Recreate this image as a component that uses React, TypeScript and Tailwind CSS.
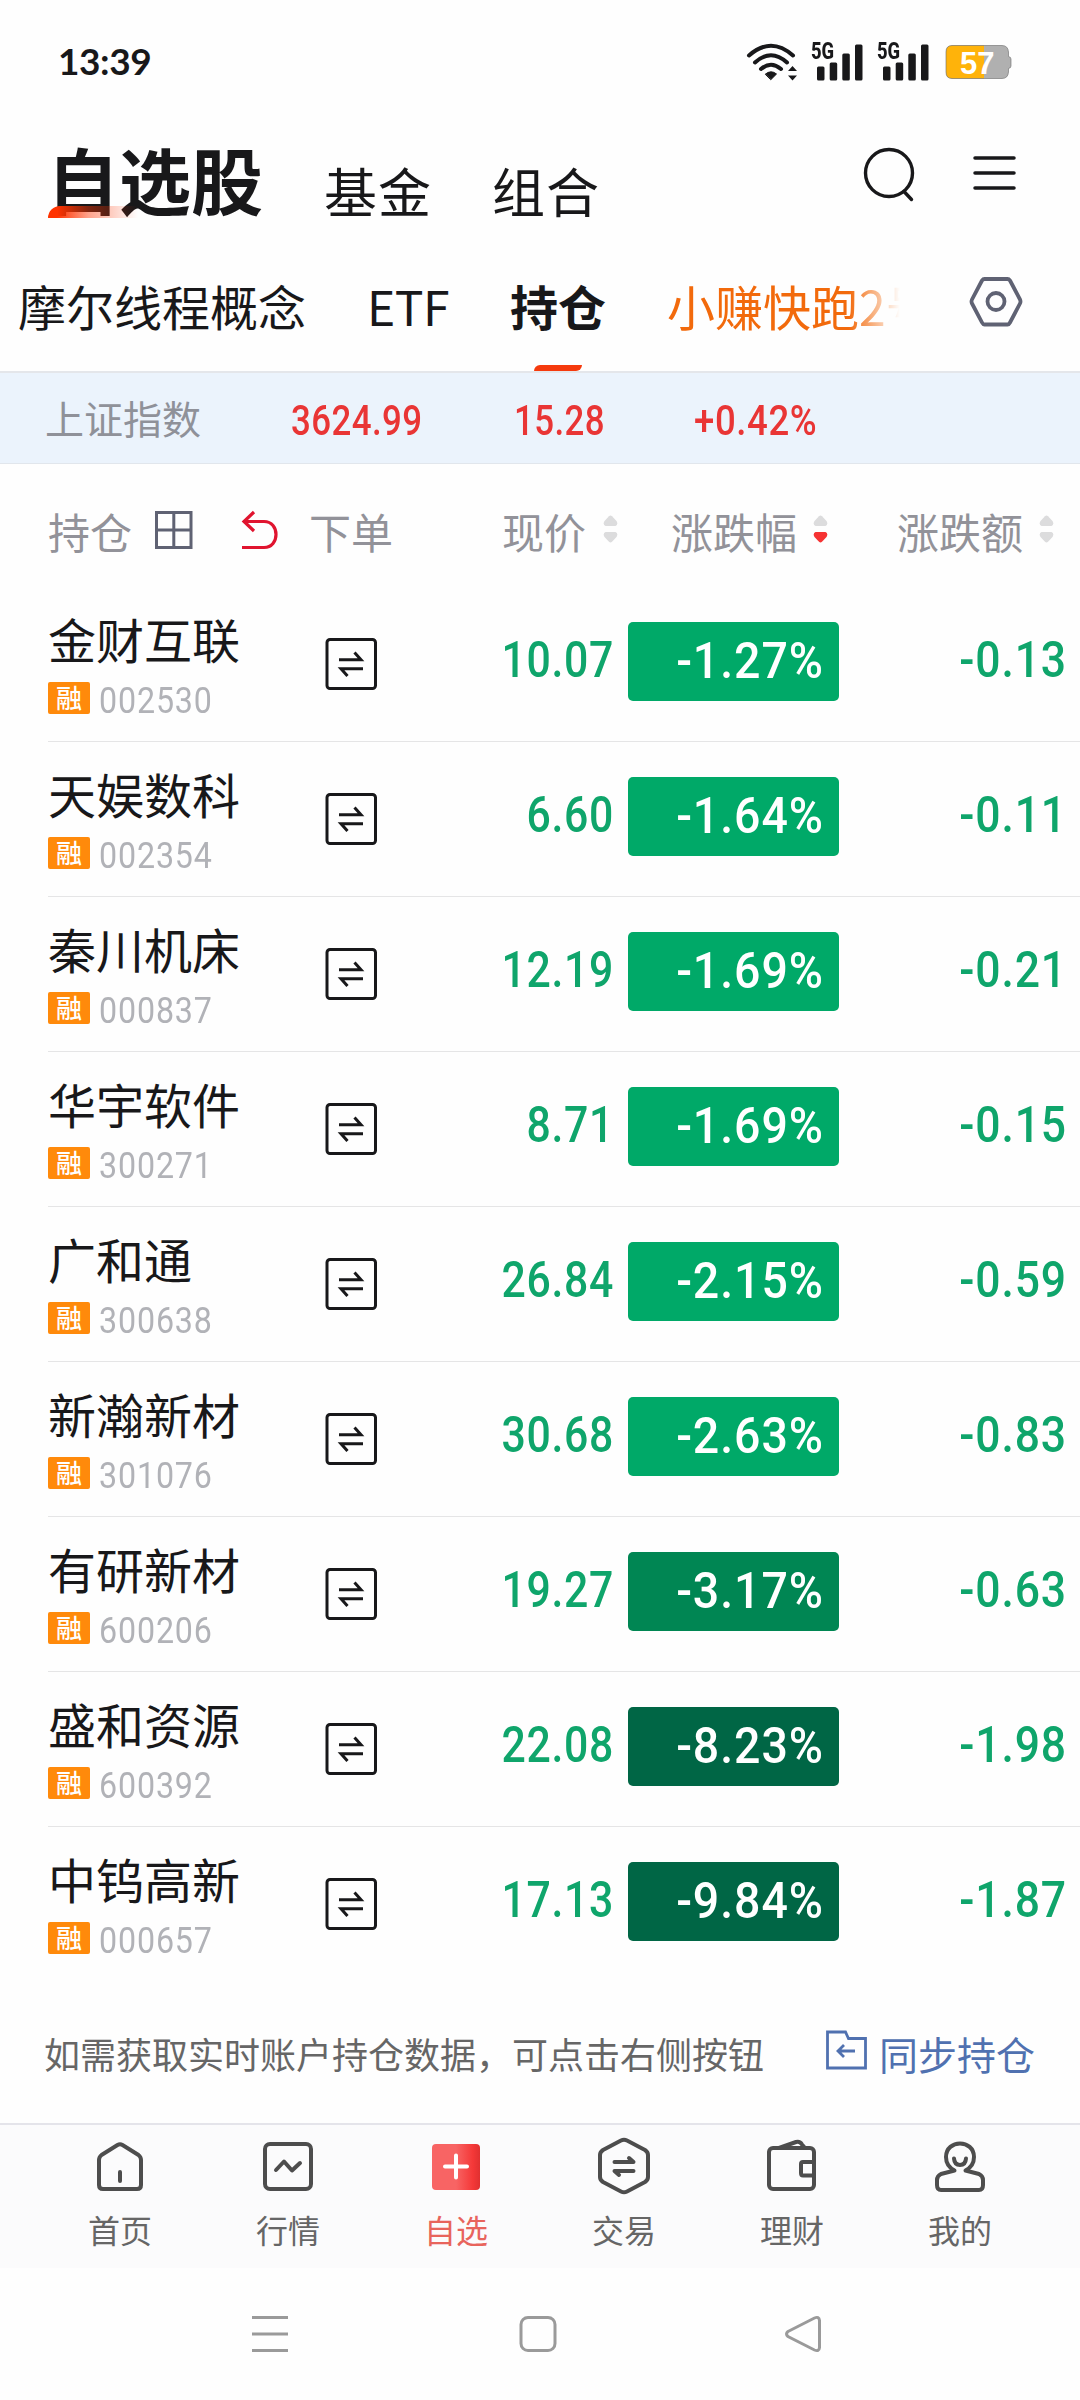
import { ReactNode } from "react"

interface Stock {
    name: string
    code: string
    price: string
    pct: string
    change: string
    bg: string
}

const GREEN = "bg-[#00a968]"
const MID_GREEN = "bg-[#008653]"
const DARK_GREEN = "bg-[#006645]"

const stocks: Stock[] = [
    { name: "金财互联", code: "002530", price: "10.07", pct: "-1.27%", change: "-0.13", bg: GREEN },
    { name: "天娱数科", code: "002354", price: "6.60", pct: "-1.64%", change: "-0.11", bg: GREEN },
    { name: "秦川机床", code: "000837", price: "12.19", pct: "-1.69%", change: "-0.21", bg: GREEN },
    { name: "华宇软件", code: "300271", price: "8.71", pct: "-1.69%", change: "-0.15", bg: GREEN },
    { name: "广和通", code: "300638", price: "26.84", pct: "-2.15%", change: "-0.59", bg: GREEN },
    { name: "新瀚新材", code: "301076", price: "30.68", pct: "-2.63%", change: "-0.83", bg: GREEN },
    { name: "有研新材", code: "600206", price: "19.27", pct: "-3.17%", change: "-0.63", bg: MID_GREEN },
    { name: "盛和资源", code: "600392", price: "22.08", pct: "-8.23%", change: "-1.98", bg: DARK_GREEN },
    { name: "中钨高新", code: "000657", price: "17.13", pct: "-9.84%", change: "-1.87", bg: DARK_GREEN },
]

export default function App() {
    return <div className="w-[1080px] h-[2400px] bg-[#fefefe] flex flex-col overflow-hidden whitespace-nowrap text-[#18181a] font-['Noto_Sans_CJK_SC',sans-serif]">
        <StatusBar />
        <Header />
        <GroupTabs />
        <IndexBar />
        <TableHead />
        <div className="h-[1395px] shrink-0">
            {stocks.map((s, i) => <StockRow key={s.code} stock={s} last={i === stocks.length - 1} />)}
        </div>
        <SyncBar />
        <BottomNav />
        <SystemNav />
    </div>
}

function StatusBar() {
    return <div className="h-[124px] shrink-0 flex items-center pl-[58px] pr-[68px]">
        <div className="mb-[4px] font-['Lato',sans-serif] font-bold text-[37px] tracking-[-0.4px] leading-none">13:39</div>
        <div className="ml-auto flex items-center">
            <svg className="w-[52px] h-[38px]" viewBox="0 0 52 38" fill="none" stroke="#18181a" strokeWidth="4" strokeLinecap="round">
                <path d="M3 12.5Q25 -7 47 12.5" />
                <path d="M9 19.5Q25 5 41 19.5" />
                <path d="M15 26Q25 17.500 35 26" />
                <path d="M19.500 31Q25 26.500 30.500 31L25 36.500Z" fill="#18181a" strokeWidth="1" />
                <path d="M42 28L46.500 23L51 28ZM42 32.500L46.500 37.500L51 32.500Z" fill="#18181a" stroke="none" />
            </svg>
            <Signal className="ml-[13px]" />
            <Signal className="ml-[14px]" />
            <Battery />
        </div>
    </div>
}

function Signal({ className }: { className: string }) {
    return <div className={`relative w-[52px] h-[38px] ${className}`}>
        <span className="absolute left-0 top-0 origin-top-left scale-x-[0.8] font-['Roboto',sans-serif] font-extrabold text-[23px] leading-[18px]">5G</span>
        <svg className="w-[52px] h-[38px]" viewBox="0 0 52 38" fill="#18181a">
            <rect x="6" y="23.500" width="7.500" height="14" rx="1.500" />
            <rect x="18.700" y="19.500" width="7.500" height="18" rx="1.500" />
            <rect x="31.300" y="10.500" width="7.500" height="27" rx="1.500" />
            <rect x="44" y="1.500" width="7.500" height="36" rx="1.500" />
        </svg>
    </div>
}

function Battery() {
    return <div className="ml-[16px] relative w-[67px] h-[36px] flex items-center">
        <svg className="w-[67px] h-[36px]" viewBox="0 0 67 36">
            <path d="M7 1.500H57Q63 1.500 63.500 8V12.500Q66 13 66 15V22Q66 24 63.500 24.500V28Q63 34.500 57 34.500H7Q1 34.500 1 28V8Q1 1.500 7 1.500Z" fill="#b0b0b0" />
            <path d="M39 1.500H7Q1 1.500 1 8V28Q1 34.500 7 34.500H39Z" fill="#ffb30a" />
            <path d="M7 1.500H57Q63 1.500 63.500 8V12.500Q66 13 66 15V22Q66 24 63.500 24.500V28Q63 34.500 57 34.500H7Q1 34.500 1 28V8Q1 1.500 7 1.500Z" fill="none" stroke="#6b6b6b" strokeOpacity=".6" />
        </svg>
        <span className="absolute left-[15px] top-[4px] font-['Liberation_Sans',sans-serif] font-bold text-[31px] leading-[32px] text-white">57</span>
    </div>
}

function Header() {
    return <div className="h-[124px] shrink-0 flex">
        <div className="relative ml-[47px] w-[216px] h-[116px]">
            <span className="block text-[72px] leading-[108px] font-bold">自选股</span>
            <div className="absolute left-px top-[82px] w-[90px] h-[12px] rounded-tl-[12px] bg-linear-to-r from-[#ff3300] from-10% via-[#ff3300]/45 via-45% to-[#ff3300]/0" />
        </div>
        <span className="ml-[61px] mt-[8px] text-[53px] tracking-[1px] leading-[116px]">基金</span>
        <span className="ml-[60px] mt-[8px] text-[53px] tracking-[1px] leading-[116px]">组合</span>
        <svg className="ml-auto mt-[22px] w-[54px] h-[58px]" viewBox="0 0 54 58" fill="none" stroke="#18181a" strokeWidth="3.400" strokeLinecap="round">
            <ellipse cx="27" cy="27" rx="23.500" ry="23.500" />
            <path d="M42 45.500L49.500 53.500" />
        </svg>
        <svg className="ml-[54px] mr-[62px] mt-[30px] w-[48px] h-[38px]" viewBox="0 0 48 38" stroke="#18181a" strokeWidth="3.500" strokeLinecap="round">
            <path d="M5 4H44M5 19H44M5 34H44" />
        </svg>
    </div>
}

function GroupTabs() {
    return <div className="h-[125px] shrink-0 border-b-2 border-[#e4e6ea] flex text-[48px] leading-[114px]">
        <span className="ml-[18px]">摩尔线程概念</span>
        <span className="ml-[61px] w-[82px] tracking-[-0.5px]">ETF</span>
        <div className="relative ml-[61px] h-[123px] font-bold">
            持仓
            <div className="absolute left-[24px] bottom-0 w-[48px] h-[6px] bg-[#f53a0d] rounded-tl-[6px] rounded-br-[6px]" />
        </div>
        <div className="ml-[61px] w-[233px] overflow-hidden text-[#f26a0c] mask-r-from-[78%] mask-r-to-[100%]">小赚快跑2号</div>
        <svg className="ml-[69px] mt-[28px] w-[54px] h-[52px]" viewBox="0 0 54 52" fill="none" stroke="#5f6273" strokeWidth="3.800" strokeLinejoin="round">
            <path d="M15.500 3H38.500Q40 3 41 4.500L51 23.500Q52 25.500 51 27.500L41 46.500Q40 48.500 38.500 48.500H15.500Q14 48.500 13 46.500L3 27.500Q2 25.500 3 23.500L13 4.500Q14 3 15.500 3Z" />
            <circle cx="27" cy="25.500" r="8.500" />
        </svg>
    </div>
}

// condensed figures, the origin keeps the given edge in place
function Num({ children, className }: { children: ReactNode, className: string }) {
    return <span className={`inline-block font-['Roboto',sans-serif] ${className}`}>{children}</span>
}

function IndexBar() {
    return <div className="h-[91px] shrink-0 bg-[#ebf3fc] border-b border-[#e1e6ec] flex items-center">
        <span className="ml-[45px] w-[246px] pb-[1px] text-[39px] text-[#8f9199]">上证指数</span>
        <Num className="pt-[4px] w-[223px] origin-left scale-x-[0.83] font-medium text-[42px] tracking-[0.5px] text-[#e93535]">3624.99</Num>
        <Num className="pt-[4px] w-[180px] origin-left scale-x-[0.83] font-medium text-[42px] tracking-[0.5px] text-[#e93535]">15.28</Num>
        <Num className="pt-[4px] origin-left scale-x-[0.87] font-medium text-[42px] tracking-[0.7px] text-[#e93535]">+0.42%</Num>
    </div>
}

function Sort({ down }: { down?: boolean }) {
    return <svg className="w-[15px] h-[28px]" viewBox="0 0 15 28">
        <path d="M6 1.200Q7.500 0 9 1.200L13.500 6Q15.500 9.500 12.500 11H2.500Q-.5 9.500 1.500 6Z" fill="#dcdcdd" />
        <path d="M6 26.800Q7.500 28 9 26.800L13.500 22Q15.500 18.500 12.500 17H2.500Q-.5 18.500 1.500 22Z" fill={down ? "#f63333" : "#dcdcdd"} />
    </svg>
}

function TableHead() {
    return <div className="h-[123px] shrink-0 pt-[10px] flex items-start text-[42px] leading-[114px] text-[#929299]">
        <div className="w-[262px] shrink-0 pl-[48px] flex">
            <span className="w-[106px] shrink-0">持仓</span>
            <svg className="mt-[36px] shrink-0 w-[40px] h-[40px]" viewBox="0 0 40 40" fill="none" stroke="#5f6273" strokeWidth="3">
                <path d="M2.500 2.500H37V37.500H2.500ZM19.800 2.500V37.500M2.500 20H37" />
            </svg>
            <svg className="ml-[46px] mt-[36px] shrink-0 w-[40px] h-[40px]" viewBox="0 0 40 40" fill="none" stroke="#e0142f" strokeWidth="3.200">
                <path d="M14 2L4 11.500L14 21M4 11.500H24C40 11.500 40 37.500 24 37.500H2" />
            </svg>
        </div>
        <span className="ml-[47px] w-[193px]">下单</span>
        <span className="w-[101px]">现价</span>
        <div className="mt-[41px] w-[68px] flex"><Sort /></div>
        <span className="w-[142px]">涨跌幅</span>
        <div className="mt-[41px] w-[84px] flex"><Sort down /></div>
        <span className="w-[142px]">涨跌额</span>
        <div className="mt-[41px] flex"><Sort /></div>
    </div>
}

function StockRow({ stock, last }: { stock: Stock, last: boolean }) {
    return <div className={`ml-[48px] h-[155px] flex border-b ${last ? "border-transparent" : "border-[#e5e5e6]"}`}>
        <div className="w-[277px] pt-[21px]">
            <div className="text-[48px] leading-[60px]">{stock.name}</div>
            <div className="mt-[14px] flex items-start">
                <span className="w-[42px] h-[32px] rounded-[2px] bg-[#ff8a0b] text-white text-[26px] leading-[30px] font-medium text-center">融</span>
                <Num className="ml-[9px] origin-left scale-x-[0.87] text-[37px] tracking-[1px] leading-[32px] pt-[3px] text-[#b1b2b7]">{stock.code}</Num>
            </div>
        </div>
        <svg className="mt-[50px] w-[52px] h-[54px]" viewBox="0 0 52 54" fill="none" stroke="#18181a" strokeWidth="3">
            <rect x="2" y="2.500" width="48.500" height="49" rx="3" />
            <path d="M14 22.700H36L29.500 15.500M38 31.700H16L22.500 39" />
        </svg>
        <Num className="w-[237px] origin-right scale-x-[0.855] text-right font-medium text-[50px] tracking-[0.8px] leading-[147px] text-[#0fa56b]">{stock.price}</Num>
        <div className={`ml-[14px] mt-[35px] w-[211px] h-[79px] rounded-[5px] pr-[15px] text-right ${stock.bg}`}>
            <Num className="origin-right scale-x-[0.93] font-medium text-[50px] tracking-[1px] leading-[78px] text-white">{stock.pct}</Num>
        </div>
        <Num className="w-[228px] origin-right scale-x-[0.89] text-right font-medium text-[50px] tracking-[1px] leading-[147px] text-[#0fa56b]">{stock.change}</Num>
    </div>
}

function SyncBar() {
    return <div className="h-[141px] shrink-0 flex items-center pl-[44px]">
        <span className="text-[36px] text-[#666]">如需获取实时账户持仓数据，可点击右侧按钮</span>
        <svg className="ml-[61px] mb-[5px] w-[42px] h-[40px]" viewBox="0 0 42 40" fill="none" stroke="#5071b0" strokeWidth="2.800">
            <path d="M2.500 2H20.500L23.500 8.500H40.500V38H2.500ZM30 21H13M19 15L13 21L19 27" />
        </svg>
        <span className="ml-[12px] pt-[2px] text-[39px] text-[#5071b0]">同步持仓</span>
    </div>
}

function NavItem({ label, active, children }: { label: string, active?: boolean, children: ReactNode }) {
    return <div className="w-[168px] flex flex-col items-center">
        <svg className="mt-[11px] w-[60px] h-[60px]" viewBox="0 0 60 60" fill="none" stroke="#4d4d4d" strokeWidth="4" strokeLinecap="round" strokeLinejoin="round">{children}</svg>
        <span className={`mt-[9px] text-[32px] leading-[48px] ${active ? "text-[#e8645c]" : "text-[#666]"}`}>{label}</span>
    </div>
}

function BottomNav() {
    return <div className="h-[145px] shrink-0 border-t-2 border-[#e4e4ea] bg-[#fbfbfc] flex pl-[36px]">
        <NavItem label="首页">
            <path d="M27.500 9Q30 7.500 32.500 9L48.500 19Q51 21 51 24V49Q51 53 47 53H13Q9 53 9 49V24Q9 21 11.500 19ZM30 36V45" />
        </NavItem>
        <NavItem label="行情">
            <rect x="7" y="8" width="46" height="45" rx="5" />
            <path d="M18 34L26 25.500L34 34.500L42 27" />
        </NavItem>
        <NavItem label="自选" active>
            <defs>
                <linearGradient id="fav">
                    <stop offset=".5" stopColor="#f86464" />
                    <stop offset=".85" stopColor="#f43838" />
                    <stop offset="1" stopColor="#e03030" />
                </linearGradient>
            </defs>
            <rect x="6" y="8" width="48" height="46" rx="4" fill="url(#fav)" stroke="none" />
            <path d="M19 30.500H41M30 19.500V41.500" stroke="#fff" />
        </NavItem>
        <NavItem label="交易">
            <path d="M27 4.500Q30 3 33 4.500L51 14Q54 16 54 19V41Q54 44 51 46L33 55.500Q30 57 27 55.500L9 46Q6 44 6 41V19Q6 16 9 14Z" />
            <path d="M20.500 26H39.500L35 22M39.500 35H20.500L25 39" />
        </NavItem>
        <NavItem label="理财">
            <rect x="7" y="12" width="45" height="41" rx="4" />
            <path d="M17 12L34 6Q38 5 40 8.500L43 12M52 26H41Q39 26 39 28V37Q39 39.500 41 39.500H52" />
        </NavItem>
        <NavItem label="我的">
            <path d="M24.500 34.500Q16 30 16 21C16 3 44 3 44 21Q44 30 35.500 34.500L49 38Q53 40 53 44V49Q53 54 49 54H11Q7 54 7 49V44Q7 40 11 38L24.500 34.500M24 22.500Q24.500 29 30 29T36 22.500" />
        </NavItem>
    </div>
}

function SystemNav() {
    return <div className="h-[132px] shrink-0 flex justify-between items-center pl-[250px] pr-[257px]">
        <svg className="w-[40px] h-[40px]" viewBox="0 0 40 40" stroke="#9a9a9a" strokeWidth="3.200">
            <path d="M2 3.500H38M2 20H38M2 36.500H38" />
        </svg>
        <svg className="w-[40px] h-[40px]" viewBox="0 0 40 40" fill="none" stroke="#9a9a9a" strokeWidth="3">
            <rect x="4" y="3.500" width="34" height="33" rx="7" />
        </svg>
        <svg className="w-[40px] h-[40px]" viewBox="0 0 40 40" fill="none" stroke="#9a9a9a" strokeWidth="3">
            <path d="M5 17.500L31.500 4Q36 2 36.500 6.500V33.500Q36 38 31.500 36L5 22.500Q2 20 5 17.500Z" />
        </svg>
    </div>
}
